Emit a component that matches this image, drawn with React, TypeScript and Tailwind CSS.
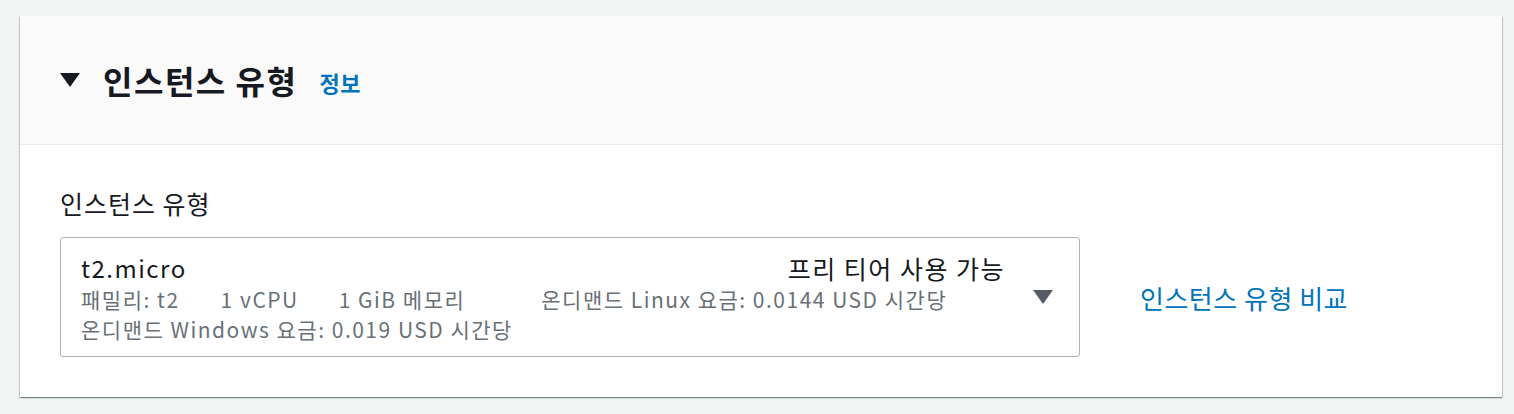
export default function App() {
  return (
    <div className="min-h-screen bg-[#f2f3f3] pl-5 pt-4 font-['Noto_Sans_CJK_KR','Noto_Sans',sans-serif]">
      <div className="w-[1482px] bg-white shadow-[0_1px_1px_0_rgba(0,28,36,0.3),1px_1px_1px_0_rgba(0,28,36,0.15),-1px_1px_1px_0_rgba(0,28,36,0.15)]">
        <div className="flex h-[129px] items-center border-b border-[#eaeded] bg-[#fafafa] px-10">
          <svg width="20" height="14" viewBox="0 0 20 14" className="mr-[23px]">
            <path d="M0 0 H20 L10 14 Z" fill="#16191f" />
          </svg>
          <h2 className="text-[32px] font-bold tracking-[1.5px] text-[#16191f]">인스턴스 유형</h2>
          <span className="ml-[22px] mt-[4px] text-[22px] font-bold tracking-[0.5px] text-[#0073bb]">정보</span>
        </div>

        <div className="px-10 pt-[41px] pb-10">
          <div className="mb-[17px] text-[25px] leading-[34px] tracking-[1px] text-[#16191f]">인스턴스 유형</div>
          <div className="flex items-center">
            <div className="flex h-[120px] w-[1020px] items-center rounded-[3px] border border-[#aab7b8] pl-[20px] pr-[26px]">
              <div className="flex-1 pt-[2px]">
                <div className="flex items-center justify-between">
                  <span className="text-[24px] leading-[32px] tracking-[1.5px] text-[#16191f]">t2.micro</span>
                  <span className="text-[25px] leading-[32px] tracking-[1.5px] text-[#16191f]">프리 티어 사용 가능</span>
                </div>
                <div className="flex text-[21px] leading-[30px] tracking-[1.5px] text-[#687078]">
                  <span>패밀리: t2</span>
                  <span className="ml-[41px]">1 vCPU</span>
                  <span className="ml-[40px]">1 GiB 메모리</span>
                  <span className="ml-[76px]">온디맨드 Linux 요금: 0.0144 USD 시간당</span>
                </div>
                <div className="text-[21px] leading-[30px] tracking-[1.5px] text-[#687078]">
                  온디맨드 Windows 요금: 0.019 USD 시간당
                </div>
              </div>
              <svg width="20" height="14" viewBox="0 0 20 14" className="ml-[28px]">
                <path d="M0 0 H20 L10 14 Z" fill="#545b64" />
              </svg>
            </div>
            <a href="#" className="ml-[60px] text-[26px] tracking-[0.5px] text-[#0073bb]">
              인스턴스 유형 비교
            </a>
          </div>
        </div>
      </div>
    </div>
  )
}
